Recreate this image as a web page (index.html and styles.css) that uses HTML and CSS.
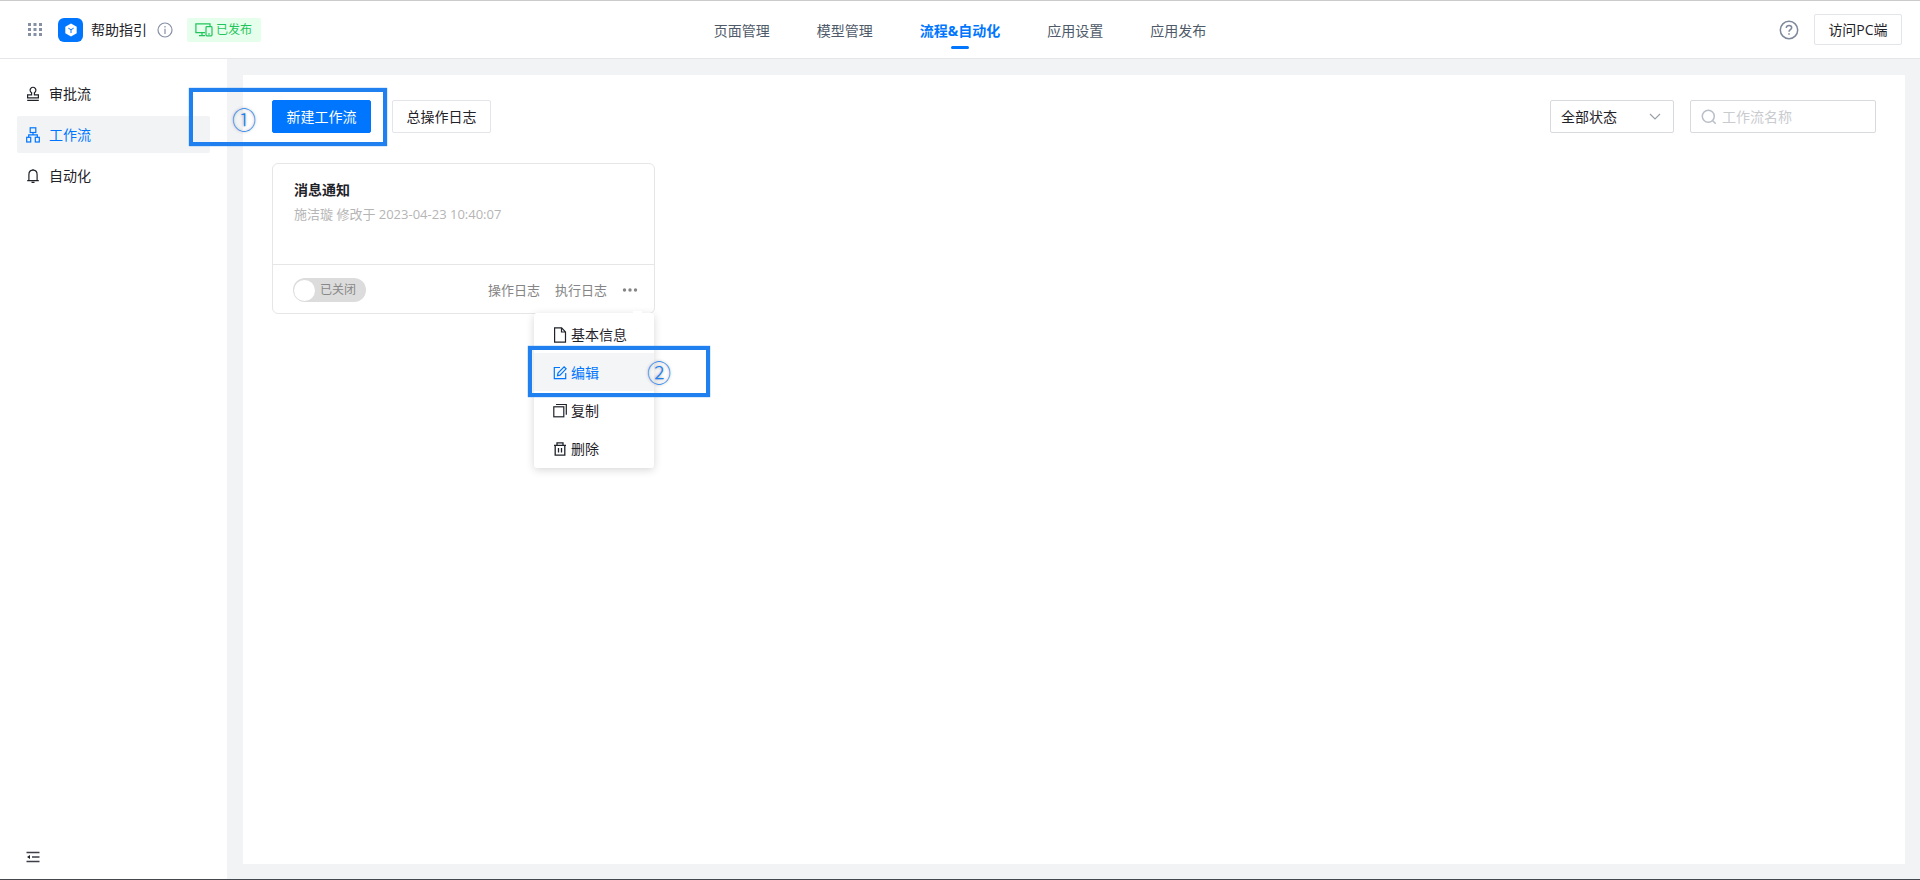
FILE: index.html
```html
<!DOCTYPE html>
<html lang="zh-CN">
<head>
<meta charset="utf-8">
<meta name="viewport" content="width=device-width, initial-scale=1">
<title>流程&amp;自动化 - 工作流</title>
<link rel="stylesheet" href="styles.css">
</head>
<body>
<div class="app">
  <header class="topbar">
    <div class="brand">
      <button class="icon-btn apps-btn" type="button" aria-label="应用">
        <svg width="16" height="16" viewBox="0 0 16 16" fill="#8690a4"><path d="M1 1h3v3H1zM6.500 1h3v3h-3zM12 1h3v3h-3zM1 6h3v3H1zM6.500 6h3v3h-3zM12 6h3v3h-3zM1 11h3v3H1zM6.500 11h3v3h-3zM12 11h3v3h-3z"/></svg>
      </button>
      <span class="logo">
        <svg width="14" height="14" viewBox="0 0 14 14"><path d="M7 .5 12.700 3.700v6.600L7 13.500 1.300 10.300V3.700z" fill="#fff"/><path d="M4.300 5.200 7 6.700l2.700-1.500M7 6.700V10" fill="none" stroke="#0076ff" stroke-width="1"/></svg>
      </span>
      <span class="app-name">帮助指引</span>
      <button class="icon-btn info-btn" type="button" aria-label="应用信息">
        <svg width="16" height="16" viewBox="0 0 16 16" fill="none" stroke="#8690a4" stroke-width="1.200"><circle cx="8" cy="8" r="7"/><path d="M8 6.800V12M8 4v1.500"/></svg>
      </button>
      <span class="tag">
        <svg width="18" height="14" viewBox="0 0 18 14" fill="none" stroke="#1fc45a" stroke-width="1.200"><path d="M15 3V.900H.900v8.700H10M4 12.600h6M7 9.600v3"/><rect x="11" y="3.600" width="6" height="9.200" rx=".8"/><path d="M13 11h2"/></svg>
        <span>已发布</span>
      </span>
    </div>
    <nav class="tabs">
      <a href="#pages">页面管理</a>
      <a href="#models">模型管理</a>
      <a href="#flows" class="current" aria-current="page">流程&amp;自动化</a>
      <a href="#settings">应用设置</a>
      <a href="#publish">应用发布</a>
    </nav>
    <div class="tools">
      <button class="icon-btn" type="button" aria-label="帮助">
        <svg width="20" height="20" viewBox="0 0 20 20" fill="none" stroke="#7d899b" stroke-width="1.500"><circle cx="10" cy="10" r="8.700"/><path d="M7.300 8c0-1.600 1.200-2.500 2.700-2.500s2.700.9 2.700 2.300c0 1.800-2.700 2-2.700 4M10 13.200v1.600"/></svg>
      </button>
      <button class="btn btn-visit" type="button">访问PC端</button>
    </div>
  </header>

  <div class="body">
    <aside class="sidebar">
      <nav class="side-nav">
        <a href="#approval">
          <svg width="14" height="16" viewBox="0 0 14 16" fill="none" stroke="#1f2329" stroke-width="1.200"><path d="M5.600 8.800V6.700a2.900 2.900 0 1 1 2.800 0v2.100h4v3H1.600v-3zM1.200 14.300h11.600"/></svg>
          <span>审批流</span>
        </a>
        <a href="#workflow" class="current" aria-current="page">
          <svg width="14" height="16" viewBox="0 0 14 16" fill="none" stroke="#0076ff" stroke-width="1.200"><rect x="4.200" y=".8" width="5.600" height="4.700"/><rect x=".7" y="10.300" width="4" height="4.700"/><rect x="9.300" y="10.300" width="4" height="4.700"/><path d="M7 5.500v2.400M2.700 10.300V7.900h8.600v2.400"/></svg>
          <span>工作流</span>
        </a>
        <a href="#automation">
          <svg width="14" height="16" viewBox="0 0 14 16" fill="none" stroke="#1f2329" stroke-width="1.200"><path d="M2.900 12.500V6.700C2.900 4 4.500 2.200 7 2.200s4.100 1.800 4.100 4.500v5.800M1.200 12.600h11.600M5.500 14.300h3M7 1v1.200"/></svg>
          <span>自动化</span>
        </a>
      </nav>
      <button class="icon-btn collapse-btn" type="button" aria-label="收起菜单">
        <svg width="14" height="12" viewBox="0 0 14 12"><path d="M.500 1.500h13M6 6h7.500M.500 10.500h13" stroke="#3c3f47" stroke-width="1.300"/><path d="M1 6 4 4v4z" fill="#1f2329"/></svg>
      </button>
    </aside>

    <main class="panel">
      <div class="toolbar">
        <div class="actions">
          <div class="marked">
            <button class="btn btn-primary" type="button">新建工作流</button>
            <div class="mark mark-create"><span class="mark-num">①</span></div>
          </div>
          <button class="btn" type="button">总操作日志</button>
        </div>
        <div class="filters">
          <div class="select-box">
            <select aria-label="状态"><option>全部状态</option></select>
            <svg width="12" height="8" viewBox="0 0 12 8" fill="none" stroke="#9aa0a8" stroke-width="1.200"><path d="m1 1 5 5 5-5"/></svg>
          </div>
          <label class="search-box">
            <svg width="16" height="16" viewBox="0 0 16 16" fill="none" stroke="#b9bfc8" stroke-width="1.500"><circle cx="7.300" cy="7.300" r="6"/><path d="m11.700 11.700 3 3"/></svg>
            <input type="text" placeholder="工作流名称" aria-label="工作流名称">
          </label>
        </div>
      </div>

      <article class="card">
        <div class="card-head">
          <h2>消息通知</h2>
          <p>施洁璇 修改于 2023-04-23 10:40:07</p>
        </div>
        <div class="card-foot">
          <label class="switch"><input type="checkbox" role="switch"><span>已关闭</span></label>
          <div class="links">
            <a href="#oplog">操作日志</a>
            <a href="#runlog">执行日志</a>
            <button class="icon-btn" type="button" aria-label="更多">
              <svg width="16" height="6" viewBox="0 0 16 6" fill="#858585"><circle cx="2.500" cy="3" r="1.700"/><circle cx="8" cy="3" r="1.700"/><circle cx="13.500" cy="3" r="1.700"/></svg>
            </button>
          </div>
        </div>
        <div class="menu">
          <button type="button">
            <svg width="14" height="16" viewBox="0 0 14 16" fill="none" stroke="#1f2329" stroke-width="1.200"><path d="M1.600.900h7l3.900 4v10.200H1.600zM8.500 1v4h4"/></svg>
            <span>基本信息</span>
          </button>
          <button type="button" class="current">
            <svg width="14" height="16" viewBox="0 0 14 16" fill="none" stroke="#0076ff" stroke-width="1.200"><path d="M7 2.500H1.300v11.200h11.400V8M4.500 10.700l.5-2.600 6.100-6.300 2 2-6.100 6.300z"/></svg>
            <span>编辑</span>
            <span class="mark mark-edit"><span class="mark-num">②</span></span>
          </button>
          <button type="button">
            <svg width="14" height="16" viewBox="0 0 14 16" fill="none" stroke="#1f2329" stroke-width="1.200"><rect x=".8" y="3.800" width="10" height="10"/><path d="M3 1.500h10.300v10.300"/></svg>
            <span>复制</span>
          </button>
          <button type="button">
            <svg width="14" height="16" viewBox="0 0 14 16" fill="none" stroke="#1f2329" stroke-width="1.300"><path d="M1 4.400h12M4 4.200V1.800h6v2.400M2.200 4.400v9.800h9.600V4.400M5.500 7v4.500M8.500 7v4.500"/></svg>
            <span>删除</span>
          </button>
        </div>
      </article>
    </main>
  </div>
</div>
</body>
</html>
```
FILE: styles.css
```css
* { box-sizing: border-box; }

body {
  margin: 0;
  color: #1f2329;
  font: 14px/20px "Open Sans", "Noto Sans CJK SC", sans-serif;
}

a { color: inherit; text-decoration: none; }

button, input, select {
  font: inherit;
  color: inherit;
}

svg { display: block; flex: none; }

.app {
  display: flex;
  flex-direction: column;
  min-height: 100vh;
  border-top: 1px solid #cbcbcb;
  border-bottom: 1px solid #45474f;
}

.icon-btn {
  padding: 0;
  border: 0;
  background: none;
  cursor: pointer;
}

.btn {
  height: 33px;
  padding: 0 12px;
  border: 1px solid #e3e5ea;
  border-radius: 2px;
  background: #fff;
  cursor: pointer;
}

/* top bar */
.topbar {
  display: grid;
  grid-template-columns: 1fr auto 1fr;
  align-items: center;
  height: 58px;
  padding: 0 18px;
  border-bottom: 1px solid #e5e6ea;
  background: #fff;
}

.brand {
  display: flex;
  align-items: center;
  padding-left: 9px;
}

.logo {
  display: flex;
  align-items: center;
  justify-content: center;
  width: 25px;
  height: 24px;
  margin: 0 8px 0 15px;
  border-radius: 6px;
  background: #0076ff;
}

.info-btn { margin: 0 14px 0 10px; }

.tag {
  display: flex;
  align-items: center;
  gap: 3px;
  height: 24px;
  padding: 0 9px 0 8px;
  border-radius: 2px;
  background: #e6ffec;
  color: #1fc45a;
  font-size: 12px;
}

.tabs {
  display: flex;
  gap: 47px;
  padding-top: 2px;
  color: #4e5969;
}

.tabs .current {
  position: relative;
  color: #0076ff;
  font-weight: 700;
}

.tabs .current::after {
  content: "";
  position: absolute;
  bottom: -8px;
  left: 50%;
  width: 18px;
  height: 3px;
  margin-left: -9px;
  border-radius: 2px;
  background: #0076ff;
}

.tools {
  display: flex;
  align-items: center;
  justify-content: flex-end;
  gap: 15px;
}

.btn-visit {
  min-width: 88px;
  height: 31px;
}

/* layout */
.body {
  display: flex;
  flex: 1;
  background: #f1f3f5;
}

.sidebar {
  display: flex;
  flex-direction: column;
  justify-content: space-between;
  flex: 0 0 227px;
  padding: 16px 17px;
  background: #fff;
}

.side-nav {
  display: flex;
  flex-direction: column;
  gap: 4px;
}

.side-nav a {
  display: flex;
  align-items: center;
  gap: 9px;
  height: 37px;
  padding: 0 9px;
  border-radius: 2px;
}

.side-nav .current {
  background: #f1f3f5;
  color: #0076ff;
}

.collapse-btn { margin-left: 9px; align-self: flex-start; }

.panel {
  flex: 1;
  min-width: 0;
  margin: 16px 15px 15px 16px;
  padding: 25px 29px;
  background: #fff;
}

.toolbar {
  display: flex;
  justify-content: space-between;
  margin-bottom: 30px;
}

.actions { display: flex; gap: 21px; }
.actions .btn { min-width: 99px; }

.btn-primary {
  border-color: #0076ff;
  background: #0076ff;
  color: #fff;
}

.filters { display: flex; gap: 16px; }

.select-box,
.search-box {
  display: flex;
  align-items: center;
  height: 33px;
  padding: 0 10px;
  border: 1px solid #d9dadd;
  border-radius: 2px;
}

.select-box { width: 124px; padding-right: 12px; }
.search-box { width: 186px; gap: 5px; }

.select-box select,
.search-box input {
  flex: 1;
  min-width: 0;
  padding: 0;
  border: 0;
  outline: 0;
  background: none;
  appearance: none;
}

.search-box input::placeholder { color: #c9cbcf; }

/* workflow card */
.card {
  position: relative;
  width: 383px;
  border: 1px solid #e6e6e6;
  border-radius: 6px;
}

.card-head {
  height: 101px;
  padding: 16px 21px;
  border-bottom: 1px solid #e6e6e6;
}

.card h2 {
  margin: 0 0 4px;
  font-size: 14px;
  font-weight: 700;
}

.card p {
  margin: 0;
  color: #b5b5b5;
  font-size: 13px;
}

.card-foot {
  display: flex;
  align-items: center;
  justify-content: space-between;
  height: 48px;
  padding: 2px 16px 0 20px;
}

.switch {
  display: flex;
  align-items: center;
  gap: 5px;
  width: 73px;
  height: 24px;
  padding: 0 2px 0 1px;
  border-radius: 12px;
  background: #dcdcdc;
  color: #888;
  font-size: 12px;
}

.switch input {
  width: 21px;
  height: 21px;
  margin: 0;
  border-radius: 50%;
  background: #fff;
  appearance: none;
}

.links {
  display: flex;
  align-items: center;
  gap: 15px;
  color: #858585;
  font-size: 13px;
}

/* card menu */
.menu {
  position: absolute;
  top: 100%;
  right: 0;
  width: 120px;
  padding: 2px 0 1px;
  border-radius: 3px;
  background: #fff;
  box-shadow: 0 2px 8px rgba(0, 0, 0, .16);
}

.menu::before {
  content: "";
  position: absolute;
  top: -2px;
  right: 12px;
  width: 9px;
  height: 4px;
  background: #fff;
}

.menu button {
  position: relative;
  display: flex;
  align-items: center;
  gap: 4px;
  width: 100%;
  height: 38px;
  padding: 2px 0 0 19px;
  border: 0;
  background: none;
  cursor: pointer;
}

.menu .current {
  background: #f3f5f7;
  color: #0076ff;
}

/* numbered step outlines */
.marked { position: relative; }

.mark {
  position: absolute;
  display: flex;
  align-items: center;
  border: 4px solid #2080f0;
  box-shadow: 0 0 1px #2080f0;
  pointer-events: none;
}

.mark-create {
  inset: -12px -16px -13px -83px;
  padding: 4px 0 0 39px;
}

.mark-edit {
  inset: -7px -56px -6px -6px;
  padding-left: 115px;
}

.mark-num {
  color: #2080f0;
  font: 300 24px/24px "Noto Sans CJK SC", sans-serif;
  text-shadow: 0 0 3px rgba(0, 0, 0, .4);
}
```
